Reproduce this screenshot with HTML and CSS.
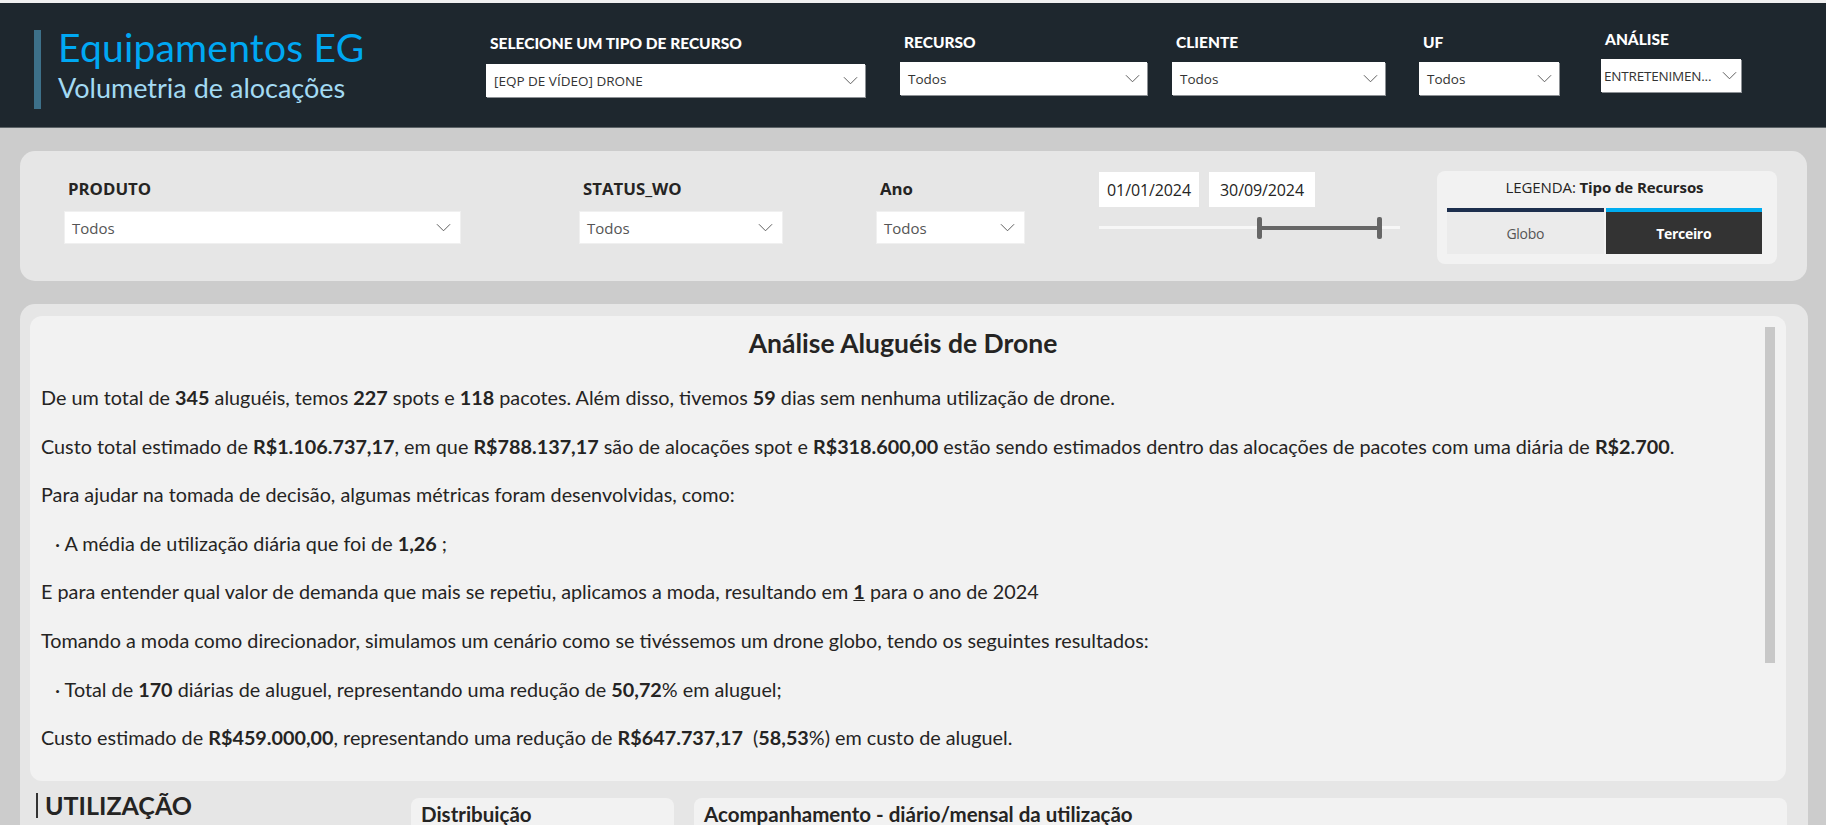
FILE: index.html
```html
<!DOCTYPE html>
<html lang="pt-BR">
<head>
<meta charset="utf-8">
<title>Equipamentos EG</title>
<link rel="stylesheet" href="styles.css">
</head>
<body>
<div class="page">
  <header class="header">
    <div class="accent"></div>
    <div class="brand">
      <div class="brand-title">Equipamentos EG</div>
      <div class="brand-sub">Volumetria de alocações</div>
    </div>
    <div class="hfilter f1">
      <div class="hlabel">SELECIONE UM TIPO DE RECURSO</div>
      <div class="hdrop"><span>[EQP DE VÍDEO] DRONE</span><svg class="chev" viewBox="0 0 16 9"><polyline points="1,1 8,8 15,1"/></svg></div>
    </div>
    <div class="hfilter f2">
      <div class="hlabel">RECURSO</div>
      <div class="hdrop"><span>Todos</span><svg class="chev" viewBox="0 0 16 9"><polyline points="1,1 8,8 15,1"/></svg></div>
    </div>
    <div class="hfilter f3">
      <div class="hlabel">CLIENTE</div>
      <div class="hdrop"><span>Todos</span><svg class="chev" viewBox="0 0 16 9"><polyline points="1,1 8,8 15,1"/></svg></div>
    </div>
    <div class="hfilter f4">
      <div class="hlabel">UF</div>
      <div class="hdrop"><span>Todos</span><svg class="chev" viewBox="0 0 16 9"><polyline points="1,1 8,8 15,1"/></svg></div>
    </div>
    <div class="hfilter f5">
      <div class="hlabel">ANÁLISE</div>
      <div class="hdrop tight"><span>ENTRETENIMEN...</span><svg class="chev" viewBox="0 0 16 9"><polyline points="1,1 8,8 15,1"/></svg></div>
    </div>
  </header>

  <section class="filters">
    <div class="pfilter g-produto">
      <div class="plabel">PRODUTO</div>
      <div class="pdrop"><span>Todos</span><svg class="chev" viewBox="0 0 16 9"><polyline points="1,1 8,8 15,1"/></svg></div>
    </div>
    <div class="pfilter g-status">
      <div class="plabel">STATUS_WO</div>
      <div class="pdrop"><span>Todos</span><svg class="chev" viewBox="0 0 16 9"><polyline points="1,1 8,8 15,1"/></svg></div>
    </div>
    <div class="pfilter g-ano">
      <div class="plabel">Ano</div>
      <div class="pdrop"><span>Todos</span><svg class="chev" viewBox="0 0 16 9"><polyline points="1,1 8,8 15,1"/></svg></div>
    </div>
    <div class="dates">
      <div class="date-row">
        <div class="date d1">01/01/2024</div>
        <div class="date d2">30/09/2024</div>
      </div>
      <div class="slider">
        <div class="track"></div>
        <div class="range" style="left:53%;width:40%"></div>
        <div class="thumb" style="left:53%"></div>
        <div class="thumb" style="left:93%"></div>
      </div>
    </div>
    <div class="legend">
      <div class="legend-title">LEGENDA: <b>Tipo de Recursos</b></div>
      <div class="legend-btns">
        <div class="lbtn globo">Globo</div>
        <div class="lbtn terceiro">Terceiro</div>
      </div>
    </div>
  </section>

  <section class="main">
    <div class="analysis">
      <div class="analysis-text">
        <h1 class="a-title">Análise Aluguéis de Drone</h1>
        <p>De um total de <b>345</b> aluguéis, temos <b>227</b> spots e <b>118</b> pacotes. Além disso, tivemos <b>59</b> dias sem nenhuma utilização de drone.</p>
        <p>Custo total estimado de <b>R$1.106.737,17</b>, em que <b>R$788.137,17</b> são de alocações spot e <b>R$318.600,00</b> estão sendo estimados dentro das alocações de pacotes com uma diária de <b>R$2.700</b>.</p>
        <p>Para ajudar na tomada de decisão, algumas métricas foram desenvolvidas, como:</p>
        <p class="bullet">· A média de utilização diária que foi de <b>1,26</b> ;</p>
        <p>E para entender qual valor de demanda que mais se repetiu, aplicamos a moda, resultando em <b class="u">1</b> para o ano de 2024</p>
        <p>Tomando a moda como direcionador, simulamos um cenário como se tivéssemos um drone globo, tendo os seguintes resultados:</p>
        <p class="bullet">· Total de <b>170</b> diárias de aluguel, representando uma redução de <b>50,72</b>% em aluguel;</p>
        <p>Custo estimado de <b>R$459.000,00</b>, representando uma redução de <b>R$647.737,17</b>&nbsp; (<b>58,53</b>%) em custo de aluguel.</p>
      </div>
      <div class="scrollbar"></div>
    </div>
    <div class="bottom-row">
      <div class="section-title"><span class="bar"></span>UTILIZAÇÃO</div>
      <div class="card c-dist"><div class="card-title">Distribuição</div></div>
      <div class="card c-acomp"><div class="card-title">Acompanhamento - diário/mensal da utilização</div></div>
    </div>
  </section>
</div>
</body>
</html>
```
FILE: styles.css
```css
html, body {
  margin: 0;
  padding: 0;
  height: 825px;
  overflow: hidden;
}
body {
  background: #cccccc;
  font-family: Lato, "Open Sans", sans-serif;
  color: #252423;
}
.page {
  border-top: 3px solid #f0f0f0;
}

/* HEADER */
.header {
  background: #1e272e;
  height: 125px;
  border-bottom: 1px solid #5d6468;
  display: flex;
  align-items: flex-start;
  padding-left: 34px;
  box-sizing: border-box;
}
.accent {
  width: 7px;
  height: 79px;
  margin-top: 27px;
  background: #3d7089;
  flex: none;
}
.brand {
  margin-left: 17px;
  margin-top: 21px;
  width: 428px;
  flex: none;
}
.brand-title {
  font-size: 39px;
  line-height: 47px;
  color: #00a8f3;
  letter-spacing: 0.2px;
}
.brand-sub {
  font-size: 27px;
  line-height: 31px;
  color: #a3daf3;
  margin-top: 1px;
}
.hfilter {
  flex: none;
  display: flex;
  flex-direction: column;
}
.hlabel {
  font-family: Lato, sans-serif;
  font-weight: 900;
  font-size: 15.5px;
  line-height: 18px;
  color: #ffffff;
  padding-left: 4px;
  white-space: nowrap;
}
.hdrop {
  background: #ffffff;
  height: 33px;
  box-sizing: border-box;
  box-shadow: 1px 1px 0 #8d9195;
  display: flex;
  align-items: center;
  justify-content: space-between;
  padding: 0 7px 0 8px;
  font-family: "Open Sans", sans-serif;
  font-size: 13.5px;
  color: #333333;
}
.hdrop.tight { padding: 0 4px 0 3px; font-size: 13.5px; letter-spacing: -0.2px; }
.chev {
  width: 15px;
  height: 9px;
  flex: none;
}
.chev polyline {
  fill: none;
  stroke: #555555;
  stroke-width: 1;
}
.f1 { width: 379px; margin-left: 0; padding-top: 31px; }
.f1 .hlabel { margin-bottom: 12px; }
.f2 { width: 247px; margin-left: 35px; padding-top: 30px; }
.f3 { width: 213px; margin-left: 25px; padding-top: 30px; }
.f4 { width: 140px; margin-left: 34px; padding-top: 30px; }
.f5 { width: 140px; margin-left: 42px; padding-top: 27px; }
.f2 .hlabel, .f3 .hlabel, .f4 .hlabel, .f5 .hlabel { margin-bottom: 11px; }

/* FILTER PANEL */
.filters {
  margin: 23px 19px 0 20px;
  height: 130px;
  background: #e6e6e6;
  border-radius: 15px;
  display: flex;
  align-items: flex-start;
  padding-left: 44px;
  box-sizing: border-box;
}
.pfilter {
  flex: none;
  display: flex;
  flex-direction: column;
  padding-top: 27px;
}
.plabel {
  font-family: "Open Sans", sans-serif;
  font-weight: 700;
  font-size: 16.8px;
  line-height: 22px;
  color: #252423;
  padding-left: 4px;
  margin-bottom: 11px;
}
.pdrop {
  background: #ffffff;
  height: 33px;
  box-sizing: border-box;
  border: 1px solid #f0f0f0;
  display: flex;
  align-items: center;
  justify-content: space-between;
  padding: 0 9px 0 7px;
  font-family: "Open Sans", sans-serif;
  font-size: 15px;
  color: #555555;
}
.g-produto { width: 397px; }
.g-status { width: 204px; margin-left: 118px; }
.g-ano { width: 149px; margin-left: 93px; }

.dates {
  flex: none;
  width: 301px;
  margin-left: 74px;
  margin-top: 21px;
}
.date-row {
  display: flex;
  gap: 10px;
}
.date {
  background: #ffffff;
  height: 35px;
  display: flex;
  align-items: center;
  justify-content: center;
  font-family: "Open Sans", sans-serif;
  font-size: 16px;
  color: #252423;
  letter-spacing: -0.1px;
}
.d1 { width: 100px; }
.d2 { width: 106px; }
.slider {
  position: relative;
  height: 22px;
  margin-top: 10px;
}
.track {
  position: absolute;
  left: 0;
  right: 0;
  top: 9px;
  height: 3px;
  background: #f7f7f7;
}
.range {
  position: absolute;
  top: 9px;
  height: 4px;
  background: #666666;
}
.thumb {
  position: absolute;
  top: 0;
  width: 5px;
  height: 22px;
  margin-left: -2px;
  border-radius: 2px;
  background: #666666;
}

.legend {
  flex: none;
  width: 340px;
  height: 93px;
  margin-left: 37px;
  margin-top: 20px;
  background: #f2f2f2;
  border-radius: 8px;
  box-sizing: border-box;
  padding: 0 15px 0 10px;
}
.legend-title {
  text-align: center;
  font-family: "Open Sans", sans-serif;
  font-size: 15px;
  line-height: 20px;
  padding-top: 6px;
  height: 37px;
  box-sizing: border-box;
  color: #252423;
  letter-spacing: -0.1px;
}
.legend-title b { font-weight: 700; }
.legend-btns {
  display: flex;
  gap: 2px;
}
.lbtn {
  flex: 1;
  height: 42px;
  display: flex;
  align-items: center;
  justify-content: center;
  font-family: "Open Sans", sans-serif;
  font-size: 14px;
  letter-spacing: -0.3px;
}
.globo {
  background: #ebebeb;
  border-top: 4px solid #1d2f4e;
  color: #555555;
}
.terceiro {
  background: #333333;
  border-top: 4px solid #00adf0;
  color: #ffffff;
  font-weight: 700;
}

/* MAIN */
.main {
  margin: 23px 18px 0 20px;
  background: #e6e6e6;
  border-radius: 15px 15px 0 0;
  padding: 12px 22px 0 10px;
  height: 600px;
}
.analysis {
  background: #f2f2f2;
  border-radius: 12px;
  display: flex;
  align-items: flex-start;
  height: 465px;
  box-sizing: border-box;
}
.analysis-text {
  flex: 1;
  padding: 12px 0 0 11px;
}
.a-title {
  margin: 0 0 15px 0;
  text-align: center;
  font-size: 26.5px;
  line-height: 30px;
  font-weight: 700;
  color: #252423;
}
.analysis-text p {
  margin: 0;
  font-size: 19.8px;
  line-height: 48.6px;
  white-space: nowrap;
  color: #252423;
}
.analysis-text p b { font-weight: 700; }
.analysis-text p.bullet { padding-left: 14px; }
.u { text-decoration: underline; }
.scrollbar {
  flex: none;
  width: 10px;
  height: 336px;
  margin: 11px 11px 0 0;
  background: #c8c8c8;
}

.bottom-row {
  display: flex;
  align-items: flex-start;
  margin-top: 17px;
  margin-left: 6px;
}
.section-title {
  flex: none;
  width: 375px;
  margin-top: -7px;
  display: flex;
  align-items: center;
  font-size: 25px;
  font-weight: 700;
  line-height: 28px;
  color: #252423;
}
.section-title .bar {
  width: 2px;
  height: 25px;
  background: #333333;
  margin-right: 7px;
}
.card {
  flex: none;
  background: #f2f2f2;
  border-radius: 8px;
  height: 120px;
  padding: 4px 10px;
  box-sizing: border-box;
}
.c-dist { width: 263px; }
.c-acomp { width: 1093px; margin-left: 20px; }
.card-title {
  font-size: 20.5px;
  font-weight: 700;
  line-height: 24px;
  color: #252423;
}
```
